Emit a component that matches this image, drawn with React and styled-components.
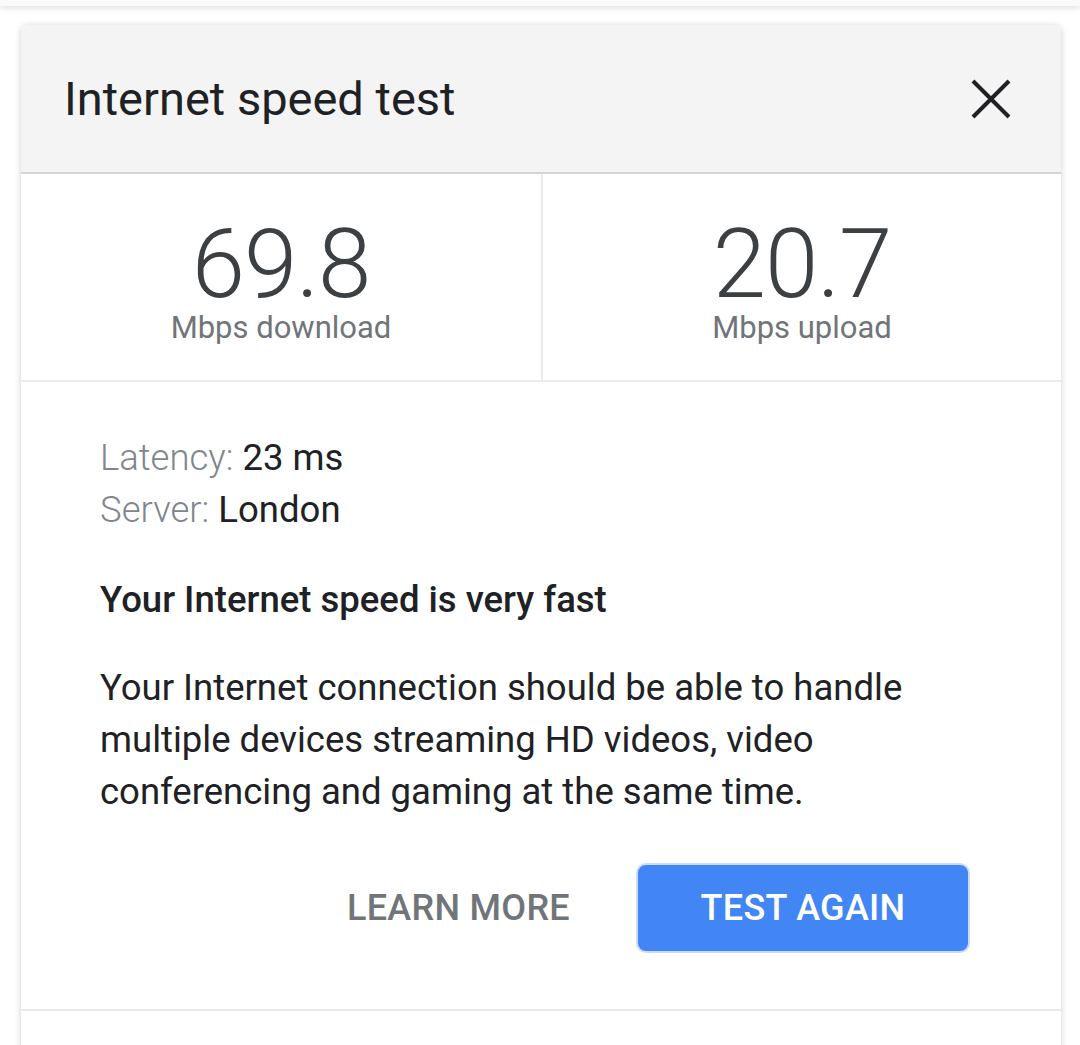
import React from 'react';
import styled, { createGlobalStyle } from 'styled-components';

const GlobalStyle = createGlobalStyle`
  html, body {
    margin: 0;
    padding: 0;
    background: #ffffff;
    font-family: Roboto, "Noto Sans", "Liberation Sans", sans-serif;
    -webkit-font-smoothing: antialiased;
  }
`;

const Page = styled.div`
  width: 1080px;
  height: 1045px;
  overflow: hidden;
  background: #ffffff;
`;

// bottom of the card above, only its shadow is visible
const PrevCard = styled.div`
  height: 6px;
  margin: -40px 0 0;
  padding-top: 40px;
  background: #fafafa;
  box-shadow: 0 2px 6px rgba(0, 0, 0, 0.12);
`;

const Card = styled.div`
  margin: 19px 19px 0 21px;
  background: #ffffff;
  border-radius: 6px 6px 0 0;
  box-shadow: 0 1px 6px rgba(0, 0, 0, 0.2);
  overflow: hidden;
`;

const Header = styled.div`
  height: 147px;
  display: flex;
  align-items: center;
  justify-content: space-between;
  padding: 0 50px 0 43px;
  background: #f4f4f4;
  border-bottom: 2px solid #d4d4d4;
`;

const Title = styled.h1`
  margin: 0;
  font-size: 47px;
  font-weight: 400;
  color: #202124;
`;

const CloseButton = styled.button`
  border: 0;
  background: none;
  padding: 0;
  width: 40px;
  height: 40px;
  display: flex;
  align-items: center;
  justify-content: center;
  cursor: pointer;
`;

const Stats = styled.div`
  display: grid;
  grid-template-columns: 1fr 1fr;
  border-bottom: 2px solid #ebebeb;
`;

const Stat = styled.div`
  height: 206px;
  display: flex;
  flex-direction: column;
  align-items: center;
  justify-content: center;
  border-left: ${p => (p.divided ? '2px solid #ebebeb' : '0')};
`;

const Value = styled.div`
  font-size: 96px;
  font-weight: 300;
  line-height: 90px;
  color: #3c4043;
  letter-spacing: -1px;
  margin-top: 11px;
`;

const Unit = styled.div`
  font-size: 31px;
  line-height: 38px;
  color: #70757a;
  margin-top: 0;
`;

const Body = styled.div`
  padding: 50px 91px 56px 79px;
  border-bottom: 2px solid #e8e8e8;
`;

const InfoLine = styled.div`
  font-size: 36.5px;
  line-height: 52px;
  color: #202124;
`;

const InfoLabel = styled.span`
  color: #80868b;
  font-weight: 300;
`;

const Verdict = styled.h2`
  margin: 38px 0 0;
  font-size: 36.5px;
  line-height: 52px;
  font-weight: 500;
  color: #202124;
`;

const Description = styled.p`
  margin: 36px 0 0;
  font-size: 36.5px;
  line-height: 52px;
  color: #202124;
`;

const Actions = styled.div`
  display: flex;
  justify-content: flex-end;
  align-items: center;
  gap: 66px;
  margin-top: 45px;
`;

const ActionButton = styled.button`
  font-family: inherit;
  font-size: 36px;
  font-weight: 500;
  letter-spacing: 0.3px;
  text-transform: uppercase;
  cursor: pointer;
  border-radius: 10px;
  box-sizing: border-box;
  height: ${p => (p.primary ? '90px' : 'auto')};
  width: ${p => (p.primary ? '334px' : 'auto')};
  padding: 0;
  color: ${p => (p.primary ? '#ffffff' : '#70757a')};
  background: ${p => (p.primary ? '#4285f4' : 'transparent')};
  border: ${p => (p.primary ? '2px solid #c9dcfb' : '0')};
`;

const Rest = styled.div`
  height: 60px;
  background: #ffffff;
`;

const CloseIcon = () => (
  <svg width="40" height="40" viewBox="0 0 40 40">
    <path d="M2 2 L38 38 M38 2 L2 38" stroke="#202124" strokeWidth="4" fill="none" />
  </svg>
);

export default function App() {
  return (
    <Page>
      <GlobalStyle />
      <PrevCard />
      <Card>
        <Header>
          <Title>Internet speed test</Title>
          <CloseButton aria-label="Close">
            <CloseIcon />
          </CloseButton>
        </Header>
        <Stats>
          <Stat>
            <Value>69.8</Value>
            <Unit>Mbps download</Unit>
          </Stat>
          <Stat divided>
            <Value>20.7</Value>
            <Unit>Mbps upload</Unit>
          </Stat>
        </Stats>
        <Body>
          <InfoLine>
            <InfoLabel>Latency:</InfoLabel> 23 ms
          </InfoLine>
          <InfoLine>
            <InfoLabel>Server:</InfoLabel> London
          </InfoLine>
          <Verdict>Your Internet speed is very fast</Verdict>
          <Description>
            Your Internet connection should be able to handle multiple devices streaming HD videos, video
            conferencing and gaming at the same time.
          </Description>
          <Actions>
            <ActionButton>Learn more</ActionButton>
            <ActionButton primary>Test again</ActionButton>
          </Actions>
        </Body>
        <Rest />
      </Card>
    </Page>
  );
}
